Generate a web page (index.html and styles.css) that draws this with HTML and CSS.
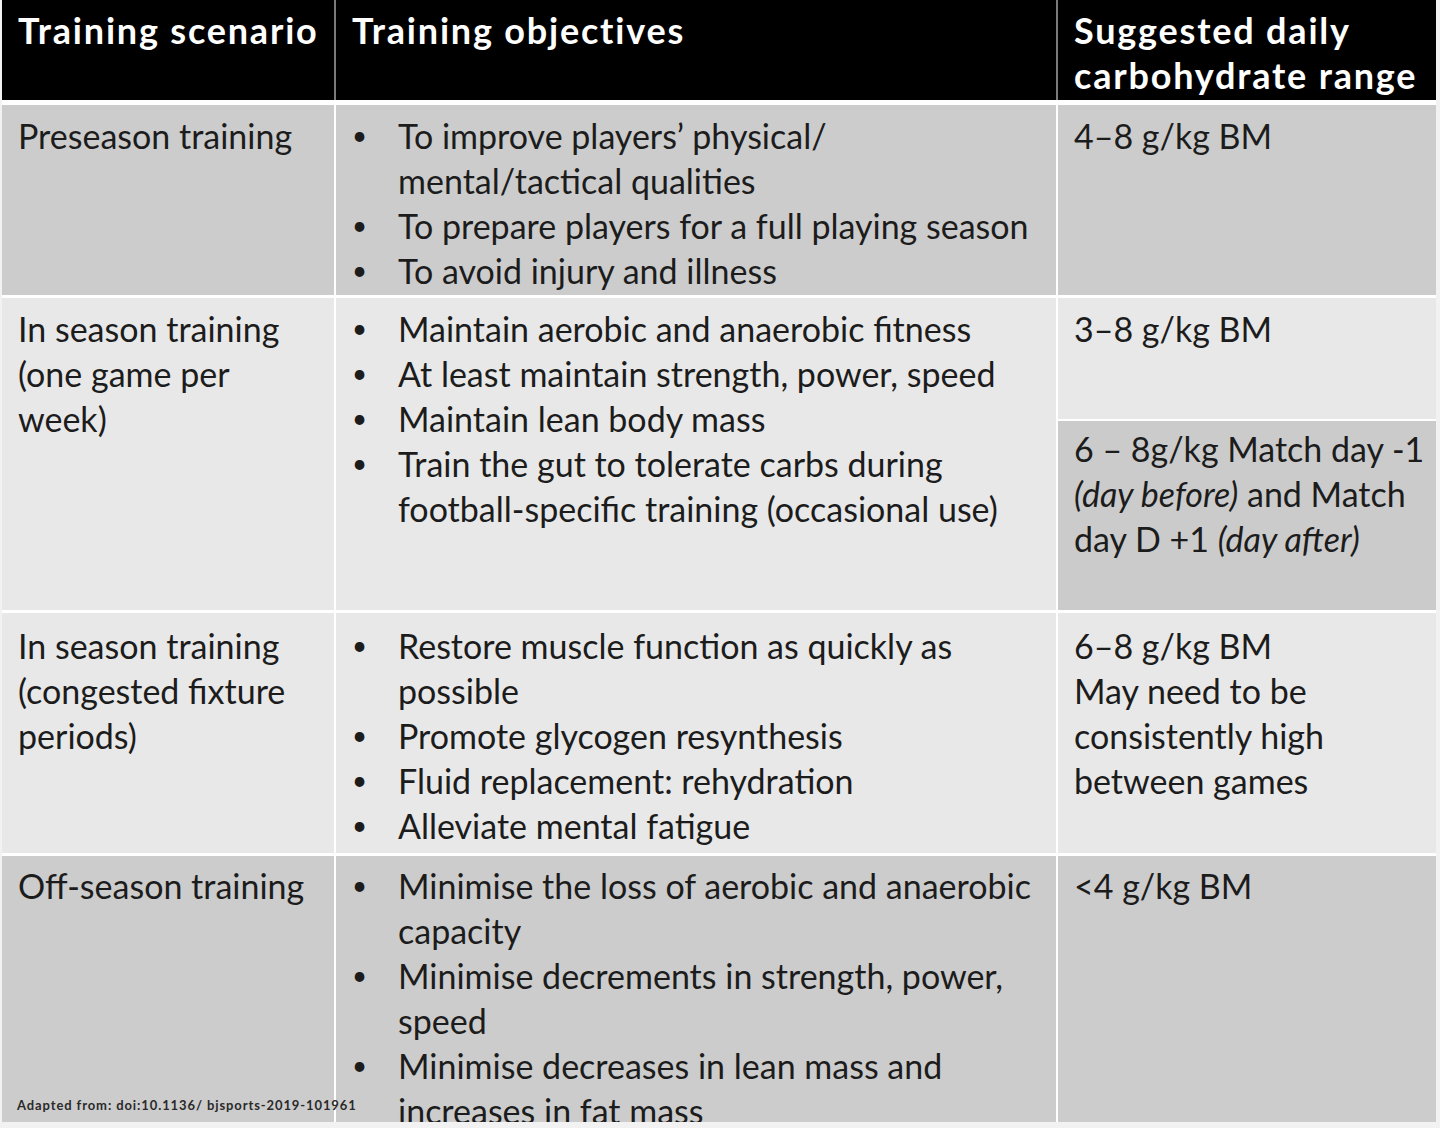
FILE: index.html
```html
<!DOCTYPE html>
<html lang="en">
<head>
<meta charset="utf-8">
<title>Carbohydrate ranges by training scenario</title>
<link rel="stylesheet" href="styles.css">
</head>
<body>
<div class="table">
  <div class="row head">
    <div class="cell">Training scenario</div>
    <div class="cell">Training objectives</div>
    <div class="cell">Suggested daily<br>carbohydrate range</div>
  </div>

  <div class="row dark r1">
    <div class="cell">Preseason training</div>
    <div class="cell">
      <ul class="list">
        <li>To improve players’ physical/<br>mental/tactical qualities</li>
        <li>To prepare players for a full playing season</li>
        <li>To avoid injury and illness</li>
      </ul>
    </div>
    <div class="cell">4–8 g/kg BM</div>
  </div>

  <div class="row light r2">
    <div class="cell">In season training<br>(one game per<br>week)</div>
    <div class="cell">
      <ul class="list">
        <li>Maintain aerobic and anaerobic fitness</li>
        <li>At least maintain strength, power, speed</li>
        <li>Maintain lean body mass</li>
        <li>Train the gut to tolerate carbs during<br>football-specific training (occasional use)</li>
      </ul>
    </div>
    <div class="split">
      <div class="cell sub-top">3–8 g/kg BM</div>
      <div class="cell sub-bottom">6 – 8g/kg Match day -1<br><em>(day before)</em> and Match<br>day D +1 <em>(day after)</em></div>
    </div>
  </div>

  <div class="row light r3">
    <div class="cell">In season training<br>(congested fixture<br>periods)</div>
    <div class="cell">
      <ul class="list">
        <li>Restore muscle function as quickly as<br>possible</li>
        <li>Promote glycogen resynthesis</li>
        <li>Fluid replacement: rehydration</li>
        <li>Alleviate mental fatigue</li>
      </ul>
    </div>
    <div class="cell">6–8 g/kg BM<br>May need to be<br>consistently high<br>between games</div>
  </div>

  <div class="row dark r4">
    <div class="cell first">
      <span>Off-season training</span>
      <span class="source">Adapted from: doi:10.1136/ bjsports-2019-101961</span>
    </div>
    <div class="cell clip">
      <ul class="list">
        <li>Minimise the loss of aerobic and anaerobic<br>capacity</li>
        <li>Minimise decrements in strength, power,<br>speed</li>
        <li>Minimise decreases in lean mass and<br>increases in fat mass</li>
      </ul>
    </div>
    <div class="cell">&lt;4 g/kg BM</div>
  </div>
</div>
</body>
</html>
```

FILE: styles.css
```css
html, body {
  margin: 0;
  padding: 0;
  background: #f2f2f2;
}

body {
  font-family: "Lato", "Liberation Sans", sans-serif;
  color: #1c1c1c;
  font-size: 34px;
  line-height: 45px;
}

.table {
  width: 1434px;
  margin-left: 2px;
  display: flex;
  flex-direction: column;
  gap: 3px;
  background: #ffffff;
}

.row {
  display: grid;
  grid-template-columns: 332px 720px 1fr;
  column-gap: 2px;
  background: #ffffff;
}

.cell {
  padding: 8px 12px 0 16px;
  white-space: nowrap;
}

.head {
  background: #7a7a7a;
  height: 100px;
  margin-bottom: 2px;
}

.head .cell {
  background: #000;
  color: #fff;
  font-weight: 700;
  font-size: 36px;
  padding-top: 8px;
  letter-spacing: 1.8px;
}

.dark .cell { background: #cccccc; }
.light .cell { background: #e8e8e8; }

.r1 { height: 190px; }
.r2 { height: 312px; }
.r3 { height: 240px; }
.r4 { height: 266px; }

.r3 .cell { padding-top: 10px; }
.r4 .cell { padding-top: 7px; }

.list {
  list-style: none;
  margin: 0;
  padding: 0;
}

.list li {
  position: relative;
  padding-left: 46px;
}

.list li::before {
  content: "•";
  position: absolute;
  left: 0;
  top: 0;
  width: 46px;
  font-size: 26px;
  line-height: 45px;
}

.split {
  display: flex;
  flex-direction: column;
  gap: 2px;
  background: #ffffff;
}

.split .sub-top {
  height: 121px;
  box-sizing: border-box;
  background: #e8e8e8;
}

.split .sub-bottom {
  flex: 1;
  background: #cbcbcb;
  padding-top: 5px;
}

.first {
  display: flex;
  flex-direction: column;
  position: relative;
  z-index: 1;
}

.source {
  margin-top: auto;
  margin-bottom: 9px;
  margin-left: -1px;
  font-size: 13px;
  font-weight: 700;
  line-height: 16px;
  letter-spacing: 0.9px;
  color: #2a2a2a;
}

.clip {
  overflow: hidden;
}

em {
  font-style: italic;
}
```
